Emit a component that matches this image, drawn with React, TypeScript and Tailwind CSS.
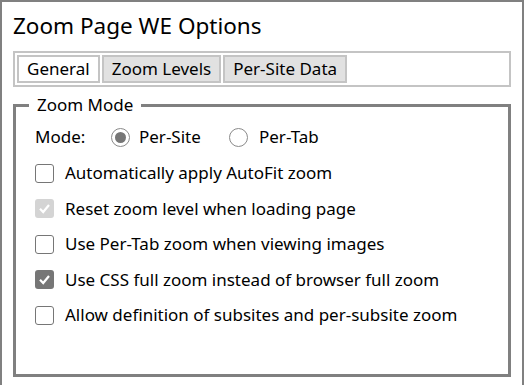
const font = { fontFamily: '"Noto Sans", "Open Sans", sans-serif' };

const Checkbox = ({ checked, disabled }: { checked?: boolean; disabled?: boolean }) => {
  if (checked) {
    return (
      <span
        className={`flex h-[19px] w-[19px] shrink-0 items-center justify-center rounded-[3px] ${
          disabled ? 'bg-[#d4d4d4]' : 'bg-[#767676]'
        }`}
      >
        <svg width="13" height="13" viewBox="0 0 13 13">
          <path d="M2 6.8 L5.2 10 L11 3" fill="none" stroke="#fff" strokeWidth="2.2" />
        </svg>
      </span>
    );
  }
  return <span className="block h-[19px] w-[19px] shrink-0 rounded-[3px] border border-[#767676] bg-white" />;
};

const Radio = ({ checked }: { checked?: boolean }) => (
  <span className="flex h-[19px] w-[19px] shrink-0 items-center justify-center rounded-full border border-[#8a8a8a] bg-white">
    {checked && <span className="block h-[11px] w-[11px] rounded-full bg-[#767676]" />}
  </span>
);

const options = [
  { label: 'Automatically apply AutoFit zoom' },
  { label: 'Reset zoom level when loading page', checked: true, disabled: true },
  { label: 'Use Per-Tab zoom when viewing images' },
  { label: 'Use CSS full zoom instead of browser full zoom', checked: true },
  { label: 'Allow definition of subsites and per-subsite zoom' },
];

export default function App() {
  return (
    <div className="h-[385px] w-[526px] overflow-hidden bg-white text-black" style={font}>
      <div className="mr-[2px] h-[400px] border-2 border-[#808080] px-[11px]">
        <h1 className="mt-[9px] text-[22.5px] leading-[30px]">Zoom Page WE Options</h1>

        <div className="mt-[10px] flex gap-[2px] border-2 border-[#c4c4c4] p-[2px]">
          {['General', 'Zoom Levels', 'Per-Site Data'].map((tab, i) => (
            <div
              key={tab}
              className={`border-2 border-[#c4c4c4] px-[8px] text-[17px] leading-[24px] ${
                i === 0 ? 'bg-white' : 'bg-[#e1e1e1]'
              }`}
            >
              {tab}
            </div>
          ))}
        </div>

        <fieldset className="mt-[8px] h-[282px] border-[3px] border-[#808080] pl-[13px] pr-2">
          <legend className="px-[8px] text-[17px] leading-[20px]">Zoom Mode</legend>

          <div className="ml-[6px] mt-[11px] flex items-center text-[17px] leading-[22px]">
            <span className="w-[76px]">Mode:</span>
            <Radio checked />
            <span className="ml-[9px] w-[90px]">Per-Site</span>
            <Radio />
            <span className="ml-[11px]">Per-Tab</span>
          </div>

          <div className="ml-[6px] mt-[14px] flex flex-col gap-[13.5px]">
            {options.map((o) => (
              <div key={o.label} className="flex items-center gap-[11px] text-[17px] leading-[22px]">
                <Checkbox checked={o.checked} disabled={o.disabled} />
                <span>{o.label}</span>
              </div>
            ))}
          </div>
        </fieldset>
      </div>
    </div>
  );
}
